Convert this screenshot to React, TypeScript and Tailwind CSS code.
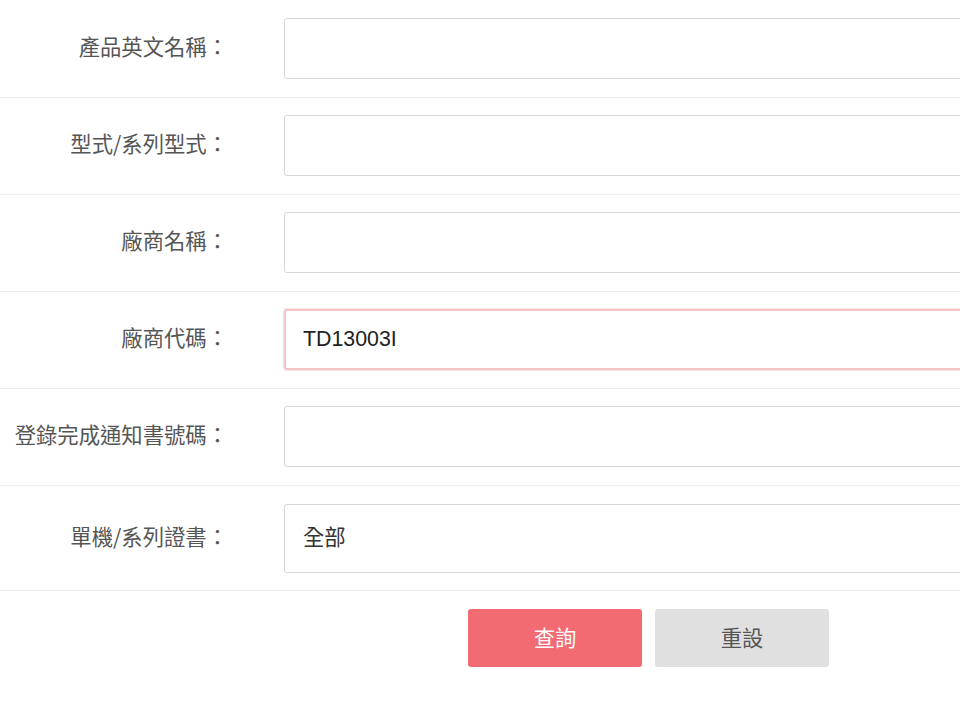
import { useState } from 'react';

const fields = [
    { label: '產品英文名稱：', value: '' },
    { label: '型式/系列型式：', value: '' },
    { label: '廠商名稱：', value: '' },
    { label: '廠商代碼：', value: 'TD13003I', focused: true },
    { label: '登錄完成通知書號碼：', value: '' },
];

export default function App() {
    const [values, setValues] = useState(fields.map((f) => f.value));
    const [cert, setCert] = useState('全部');

    return (
        <div className="w-[960px] h-[720px] overflow-hidden bg-white pt-px font-['Liberation_Sans','Noto_Sans_CJK_TC',sans-serif] text-[21.33px]">
            <div className="w-[1040px]">
                {fields.map((f, i) => (
                    <div key={f.label} className="flex items-center pt-[17px] pb-[18px] border-b border-[#eeeeee]">
                        <label className="w-[228px] shrink-0 pb-[5px] text-right text-[#555555] font-['Noto_Sans_CJK_TC',sans-serif] leading-none">
                            {f.label}
                        </label>
                        <input
                            type="text"
                            value={values[i]}
                            onChange={(e) => setValues(values.map((v, j) => (j === i ? e.target.value : v)))}
                            className={
                                f.focused
                                    ? 'ml-[56px] flex-1 h-[61px] rounded-[3px] border-2 border-[#f3c3c6] px-[17px] text-[#222222] outline-none shadow-[0_0_0_1px_#fae3e4]'
                                    : 'ml-[56px] flex-1 h-[61px] rounded-[3px] border border-[#d6d6d6] px-[18px] text-[#222222] outline-none'
                            }
                        />
                    </div>
                ))}

                {/* 單機/系列證書 */}
                <div className="flex items-center pt-[18px] pb-[17px] border-b border-[#eeeeee]">
                    <label className="w-[228px] shrink-0 pb-[5px] text-right text-[#555555] font-['Noto_Sans_CJK_TC',sans-serif] leading-none">
                        單機/系列證書：
                    </label>
                    <select
                        value={cert}
                        onChange={(e) => setCert(e.target.value)}
                        className="ml-[56px] flex-1 h-[69px] appearance-none rounded-[3px] border border-[#d6d6d6] bg-white px-[18px] pb-[6px] text-[#333333] font-['Noto_Sans_CJK_TC',sans-serif] outline-none"
                    >
                        <option>全部</option>
                        <option>單機</option>
                        <option>系列</option>
                    </select>
                </div>

                <div className="flex gap-[13px] pl-[468px] pt-[18px]">
                    <button className="w-[174px] h-[58px] rounded-[3px] bg-[#f26b73] pb-[3px] text-white font-['Noto_Sans_CJK_TC',sans-serif]">
                        查詢
                    </button>
                    <button className="w-[174px] h-[58px] rounded-[3px] bg-[#e0e0e0] pb-[3px] text-[#555555] font-['Noto_Sans_CJK_TC',sans-serif]">
                        重設
                    </button>
                </div>
            </div>
        </div>
    );
}
